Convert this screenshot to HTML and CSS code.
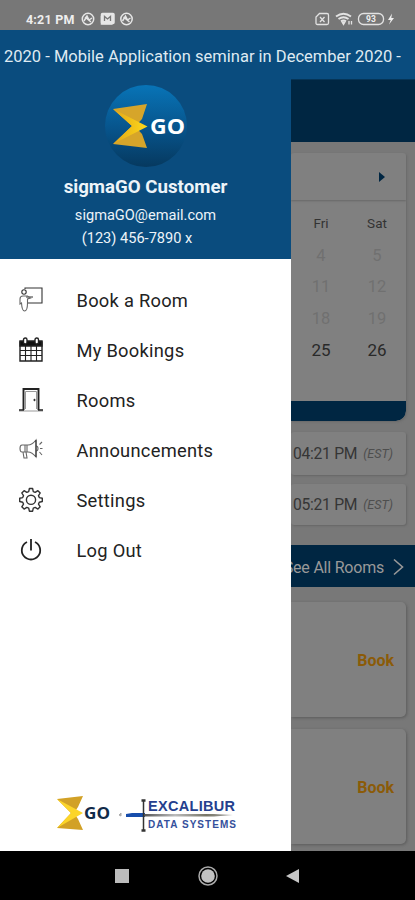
FILE: index.html
```html
<!DOCTYPE html>
<html lang="en">
<head>
<meta charset="utf-8">
<title>sigmaGO</title>
<link rel="stylesheet" href="styles.css">
</head>
<body>
<div class="status">
  <span class="clock">4:21 PM</span>
  <svg class="st-left" width="54" height="14" viewBox="0 0 54 14" fill="none" stroke="#e6e6e6" stroke-width="1.5">
    <circle cx="7" cy="7" r="5.7"/><path d="M3 9l3-5 2 4 3-2M4 5l6 5"/>
    <path d="M20.500 4v8h11"/><rect x="20.500" y="1.500" width="12.500" height="10" rx="1" fill="#e6e6e6"/><path d="M23.500 9V4.500l3 2.500 3-2.500V9" stroke="#777" stroke-width="1.300"/>
    <circle cx="45.500" cy="7" r="5.700"/><path d="M41.500 9l3-5 2 4 3-2M42.500 5l6 5"/>
  </svg>
  <svg class="st-right" width="82" height="14" viewBox="0 0 82 14" fill="none" stroke="#e2e2e2" stroke-width="1.300">
    <path d="M4.500 1.500h7.500q1.500 0 1.500 1.500v8q0 1.500-1.500 1.500H2.500Q1 12.500 1 11V5z"/><path d="M5 5l4.500 5M9.500 5L5 10"/>
    <path d="M21 4.500q7.500-5.500 15 0M23.500 7q5-3.500 10 0M26 9.300q2.500-1.800 5 0" stroke-width="1.900"/><path d="M27 10h3l-1.500 2.500z" fill="#e2e2e2"/><path d="M34 9v3.500M36.500 9v3.500"/>
    <rect x="43.500" y="1.500" width="25" height="11" rx="5"/>
    <text x="56" y="10.200" text-anchor="middle" class="battery">93</text>
    <path d="M77 1.500L73 8h2.700L74 12.500 79 6h-2.700z" fill="#eee" stroke="none"/>
  </svg>
</div>
<div class="ticker"><span>2020 - Mobile Application seminar in December 2020 -</span></div>
<div class="screen">
  <aside class="drawer">
    <header class="profile">
      <svg class="avatar" width="82" height="82" viewBox="0 0 82 82">
        <defs>
          <linearGradient id="disc" x1="0" y1="0" x2="0" y2="1"><stop offset="0" stop-color="#0874b7"/><stop offset=".55" stop-color="#07538a"/><stop offset="1" stop-color="#06395f"/></linearGradient>
          <linearGradient id="gold" x1="0" y1="0" x2="1" y2="0"><stop offset="0" stop-color="#e2a618"/><stop offset="1" stop-color="#fdd91b"/></linearGradient>
        </defs>
        <circle cx="41" cy="41" r="41" fill="url(#disc)"/>
        <path d="M8 24L42 19 37 34 30 41.500 37 49 42 63 8 59 27 41z" fill="#d6a52a"/>
        <path d="M8 24L42.500 41.500 8 59 27 41z" fill="url(#gold)"/>
        <text x="45" y="48.500" textLength="35" lengthAdjust="spacingAndGlyphs" class="go">GO</text>
      </svg>
      <h1>sigmaGO Customer</h1>
      <p class="mail">sigmaGO@email.com</p>
      <p class="phone">(123) 456-7890 x</p>
    </header>
    <nav class="menu">
      <a class="item"><svg width="24" height="26" viewBox="0 0 24 26" fill="none" stroke="#333" stroke-width="1.100"><path d="M6 2V1h17v15H9M7 10h7"/><circle cx="5" cy="5" r="2.200"/><path d="M1 17v-5q0-3 3-3h4.500l3 2-3 1v4q0 8-3 8-2.500 0-3-8z" stroke="#666"/></svg><span>Book a Room</span></a>
      <a class="item"><svg width="24" height="26" viewBox="0 0 24 26" fill="none" stroke="#222" stroke-width="1.400"><path d="M1 5h22v19H1z"/><path d="M1 4h22v5H1z" fill="#111"/><path d="M1 13.500h22M1 18.500h22M6.500 9v15M12 9v15M17.500 9v15" stroke-width="1.100"/><rect x="4.500" y="1" width="3.500" height="6" rx="1.700" fill="#fff"/><rect x="16" y="1" width="3.500" height="6" rx="1.700" fill="#fff"/></svg><span>My Bookings</span></a>
      <a class="item"><svg width="24" height="26" viewBox="0 0 24 26" fill="none" stroke="#222"><path d="M4.500 23V2h15v21" stroke-width="1.900"/><path d="M6.500 22V4.500h11V22M0 24h24" stroke="#999"/><path d="M0 23h5M19 23h5" stroke-width="1.300"/><circle cx="15.500" cy="13" r=".7" fill="#222"/></svg><span>Rooms</span></a>
      <a class="item"><svg width="24" height="26" viewBox="0 0 24 26" fill="none" stroke="#666" stroke-width="1.100"><path d="M3 8h6q4 0 8-5v17q-4-5-8-5H3Q1 15 1 11.500T3 8zM8 8v7M6 8v7M4 15l1 6h3l-1-6"/><path d="M17 9q2 0 2 2.500T17 14M20.500 7.500L23 5M21 11.500h2.500M20.500 15l2.500 3"/><path d="M17 3v17" stroke="#333"/></svg><span>Announcements</span></a>
      <a class="item"><svg width="24" height="26" viewBox="0 0 24 26" fill="none" stroke="#333" stroke-width="1.400" stroke-linejoin="round"><path d="M10.400 1.500h3.200l.7 3.100 1.900.8 2.700-1.700 2.300 2.300-1.700 2.700.8 1.900 3 .7v3.200l-3 .7-.8 1.900 1.700 2.700-2.300 2.300-2.700-1.700-1.900.8-.7 3h-3.200l-.7-3-1.900-.8-2.700 1.700-2.300-2.300 1.700-2.700-.8-1.900-3-.7v-3.200l3-.7.8-1.900L2.800 6l2.300-2.300 2.700 1.700 1.900-.8z"/><circle cx="12" cy="12.800" r="4.600"/></svg><span>Settings</span></a>
      <a class="item"><svg width="24" height="26" viewBox="0 0 24 26" fill="none" stroke="#222" stroke-width="1.800"><path d="M8 5a9.200 9.200 0 1 0 8 0M12 2v11.500"/></svg><span>Log Out</span></a>
    </nav>
    <footer class="brands">
      <svg width="182" height="40" viewBox="0 0 182 40">
        <defs><linearGradient id="blade" x1="0" y1="0" x2="1" y2="0"><stop offset="0" stop-color="#555"/><stop offset=".35" stop-color="#bbb"/><stop offset=".7" stop-color="#777566"/><stop offset="1" stop-color="#aaa"/></linearGradient></defs>
        <path d="M1 5L27 2 22 13 18 19 22 25 27 36 1 34 15 19z" fill="#d2a126"/>
        <path d="M1 5L27 19 1 34 15 19z" fill="#fcd529"/>
        <text x="28" y="25" textLength="26" lengthAdjust="spacingAndGlyphs" class="go-dark">GO</text>
        <path d="M63 21l2-2v3z" fill="#aaa" stroke="#aaa"/>
        <path d="M70 20l6-1h13v4H70z" fill="#174dab"/>
        <path d="M88 20h70l19 1-19 1.500H88z" fill="url(#blade)"/>
        <path d="M87.500 7v29" stroke="#333" stroke-width="1.500"/>
        <path d="M85.500 6.500h4M85.500 36.500h4" stroke="#333" stroke-width="2.500"/>
        <text x="92" y="16.500" textLength="87" lengthAdjust="spacing" class="ex">EXCALIBUR</text>
        <text x="92" y="33.500" textLength="88" lengthAdjust="spacing" class="ds">DATA SYSTEMS</text>
      </svg>
    </footer>
  </aside>
  <main class="page">
    <div class="appbar"></div>
    <section class="calendar">
      <div class="month"><svg width="6" height="10" viewBox="0 0 6 10"><path d="M0 0l6 5-6 5z" fill="#002642"/></svg></div>
      <div class="days">
        <b>Fri</b><b>Sat</b>
        <i>4</i><i>5</i><i>11</i><i>12</i><i>18</i><i>19</i>
        <span>25</span><span>26</span>
      </div>
      <div class="calfoot"></div>
    </section>
    <div class="time first">04:21 PM<em>(EST)</em></div>
    <div class="time second">05:21 PM<em>(EST)</em></div>
    <div class="seeall"><span>See All Rooms</span><svg width="11" height="18" viewBox="0 0 11 18" fill="none" stroke="#999" stroke-width="1.600"><path d="M1 1.500l8.500 7.500L1 16.500"/></svg></div>
    <div class="room">Book</div>
    <div class="room">Book</div>
  </main>
</div>
<div class="navbar">
  <svg width="14" height="14"><rect width="14" height="14" fill="#bcbcbc"/></svg>
  <svg width="20" height="20" viewBox="0 0 20 20"><circle cx="10" cy="10" r="9" fill="none" stroke="#aaa" stroke-width="1.500"/><circle cx="10" cy="10" r="6.800" fill="#c2c2c2"/></svg>
  <svg width="13" height="14" viewBox="0 0 13 14"><path d="M13 0v14L0 7z" fill="#c6c6c6"/></svg>
</div>
</body>
</html>
```
FILE: styles.css
```css
* { box-sizing: border-box; }
body { margin: 0; width: 415px; height: 900px; overflow: hidden; font-family: Roboto, "Liberation Sans", sans-serif; background: #000; }
h1, p { margin: 0; }
svg { display: block; flex: none; }

.status { height: 30px; background: #777; display: flex; align-items: center; padding: 8px 18px 0 26px; color: #eee; }
.clock { font-size: 12.5px; font-weight: 700; width: 55px; white-space: nowrap; letter-spacing: .2px; }
.st-right { margin-left: auto; }
.battery { font: 700 8.5px Roboto, sans-serif; fill: #eee; stroke: none; }

.ticker { height: 49px; background: #0a4c7e; color: #dfeaf2; display: flex; align-items: center; padding: 3px 0 0 4px; font-size: 16.5px; white-space: nowrap; letter-spacing: .01px; }

.screen { display: flex; height: 772px; }
.drawer { width: 291px; flex: none; background: #fff; display: flex; flex-direction: column; }
.profile { height: 180px; background: #0a4c7e; color: #edf4f9; display: flex; flex-direction: column; align-items: center; padding-top: 6px; }
.profile h1 { font-size: 18.7px; font-weight: 700; line-height: 24px; margin-top: 8px; white-space: nowrap; }
.mail { font-size: 14.6px; line-height: 22px; margin-top: 5px; }
.phone { font-size: 14.6px; line-height: 22px; margin-top: 1px; padding-right: 17px; }
.go { font: 700 21px "Open Sans", sans-serif; fill: #fff; }

.menu { padding-top: 16px; }
.item { display: flex; align-items: center; gap: 33.5px; height: 50px; padding-left: 19px; font-size: 18.3px; color: #222; white-space: nowrap; letter-spacing: .27px; }
.brands { margin-top: auto; padding: 0 0 17px 56px; }
.go-dark { font: 700 16px "Open Sans", sans-serif; fill: #112b4a; }
.ex { font: 700 14.5px "Liberation Sans", sans-serif; fill: #253f8e; }
.ds { font: 700 10px "Liberation Sans", sans-serif; fill: #34509c; }

.page { flex: 1; min-width: 0; background: #787878; display: flex; flex-direction: column; overflow: hidden; }
.appbar { height: 63px; background: #002642; flex: none; border-top: 1px solid #063557; }
.calendar { margin: 11px 9px 0 0; height: 268px; flex: none; background: #808080; border-radius: 3px 3px 10px 0; box-shadow: 1px 1px 2px #6a6a6a; display: flex; flex-direction: column; overflow: hidden; }
.month { height: 47px; display: flex; align-items: center; justify-content: flex-end; padding-right: 21px; box-shadow: 0 1px 2px #666; }
.days { flex: 1; display: grid; grid-template-columns: 56px 56px; grid-template-rows: 41px 24px 39px 25px 38px; align-content: start; padding-left: 2px; padding-top: 2px; place-items: center; }
.days b { font-size: 13.5px; font-weight: 400; color: #333; }
.days i { font-size: 16.5px; font-style: normal; color: #707070; }
.days span { font-size: 17px; color: #292929; }
.calfoot { height: 20px; background: #002642; border-radius: 0 0 10px 0; }

.time { margin: 11px 9px 0 0; height: 43px; flex: none; background: #808080; border-radius: 3px; box-shadow: 1px 1px 2px #666; display: flex; align-items: center; padding-left: 2px; font-size: 15.7px; letter-spacing: -.3px; color: #353535; white-space: nowrap; }
.second { margin-top: 9px; height: 41px; }
.time em { font-size: 12.5px; letter-spacing: 0; color: #4e4e4e; margin-left: 6px; }
.seeall { margin-top: 20px; height: 42px; flex: none; background: #002642; color: #999; font-size: 16px; display: flex; align-items: center; justify-content: flex-end; gap: 9px; padding: 2px 11px 0 0; white-space: nowrap; }
.seeall span { letter-spacing: -.22px; }
.room { margin: 15px 9px 0 0; height: 115px; flex: none; background: #808080; border-radius: 0 5px 5px 0; box-shadow: 1px 1px 3px #5c5c5c; display: flex; align-items: center; justify-content: flex-end; padding: 2px 12px 0 0; font-size: 16px; font-weight: 700; color: #8b5b08; }
.room + .room { margin-top: 12px; }

.navbar { height: 49px; background: #000; display: flex; align-items: center; padding-left: 115px; }
.navbar svg:nth-child(2) { margin-left: 69px; }
.navbar svg:nth-child(3) { margin-left: 68px; }
```
